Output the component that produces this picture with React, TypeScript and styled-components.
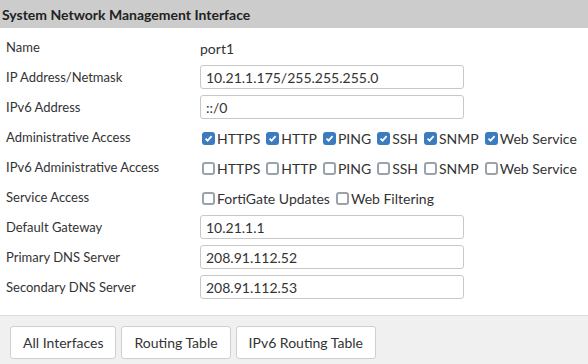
import styled, { createGlobalStyle } from 'styled-components';

const GlobalStyle = createGlobalStyle`
    html, body {
        margin: 0;
        padding: 0;
        background: #fff;
    }
    body {
        font-family: 'Lato', 'Liberation Sans', sans-serif;
        color: #333;
    }
`;

const Panel = styled.div`
    width: 588px;
    height: 364px;
    display: flex;
    flex-direction: column;
    overflow: hidden;
`;

const Header = styled.div`
    height: 28px;
    background: #cccccc;
    display: flex;
    align-items: center;
    padding-left: 2px;
    font-size: 14px;
    font-weight: 700;
    color: #222;
`;

const Form = styled.div`
    flex: 1;
    padding-top: 4px;
    display: flex;
    flex-direction: column;
`;

const Row = styled.div`
    height: 30px;
    display: grid;
    grid-template-columns: 200px 1fr;
    align-items: center;
`;

const Label = styled.div`
    padding-left: 6px;
    font-size: 13px;
    color: #333;
`;

const Value = styled.div`
    font-size: 14px;
    color: #333;
    padding-top: 2px;
`;

const TextInput = styled.input`
    box-sizing: border-box;
    width: 264px;
    height: 24px;
    border: 1px solid #c8c8c8;
    border-radius: 3px;
    padding: 0 5px;
    font-family: 'Lato', 'Liberation Sans', sans-serif;
    font-size: 14px;
    color: #333;
    outline: none;
    display: block;
`;

const CheckGroup = styled.div`
    display: flex;
    align-items: center;
    gap: 4px;
    padding-top: 3px;
`;

const CheckItem = styled.label`
    display: flex;
    align-items: center;
    gap: 2px;
    font-size: 14px;
    color: #333;
`;

const Box = styled.span<{ $checked: boolean }>`
    box-sizing: border-box;
    width: 13px;
    height: 13px;
    margin-left: 2px;
    border-radius: 3px;
    border: ${(p) => (p.$checked ? 'none' : '2px solid #9aa3ab')};
    background: ${(p) => (p.$checked ? '#3b7bbf' : '#fff')};
    display: flex;
    align-items: center;
    justify-content: center;
`;

const Footer = styled.div`
    height: 49px;
    border-top: 1px solid #dcdcdc;
    background: #f0f0f0;
    display: flex;
    align-items: center;
    gap: 5px;
    padding-left: 10px;
    padding-top: 4px;
    box-sizing: border-box;
`;

const FooterButton = styled.button`
    height: 33px;
    padding: 0 12px;
    background: #fff;
    border: 1px solid #cfcfcf;
    border-radius: 3px;
    font-family: 'Lato', 'Liberation Sans', sans-serif;
    font-size: 14px;
    color: #333;
`;

function Check({ label, checked }: { label: string; checked: boolean }) {
    return (
        <CheckItem>
            <Box $checked={checked}>
                {checked && (
                    <svg width="9" height="9" viewBox="0 0 9 9">
                        <path d="M1.5 4.6 L3.6 6.6 L7.6 2.2" fill="none" stroke="#fff" strokeWidth="1.8" />
                    </svg>
                )}
            </Box>
            {label}
        </CheckItem>
    );
}

const protocols = ['HTTPS', 'HTTP', 'PING', 'SSH', 'SNMP', 'Web Service'];

function App() {
    return (
        <Panel>
            <GlobalStyle />
            <Header>System Network Management Interface</Header>
            <Form>
                <Row>
                    <Label>Name</Label>
                    <Value>port1</Value>
                </Row>
                <Row>
                    <Label>IP Address/Netmask</Label>
                    <TextInput defaultValue="10.21.1.175/255.255.255.0" />
                </Row>
                <Row>
                    <Label>IPv6 Address</Label>
                    <TextInput defaultValue="::/0" />
                </Row>
                <Row>
                    <Label>Administrative Access</Label>
                    <CheckGroup>
                        {protocols.map((p) => (
                            <Check key={p} label={p} checked />
                        ))}
                    </CheckGroup>
                </Row>
                <Row>
                    <Label>IPv6 Administrative Access</Label>
                    <CheckGroup>
                        {protocols.map((p) => (
                            <Check key={p} label={p} checked={false} />
                        ))}
                    </CheckGroup>
                </Row>
                <Row>
                    <Label>Service Access</Label>
                    <CheckGroup>
                        <Check label="FortiGate Updates" checked={false} />
                        <Check label="Web Filtering" checked={false} />
                    </CheckGroup>
                </Row>
                <Row>
                    <Label>Default Gateway</Label>
                    <TextInput defaultValue="10.21.1.1" />
                </Row>
                <Row>
                    <Label>Primary DNS Server</Label>
                    <TextInput defaultValue="208.91.112.52" />
                </Row>
                <Row>
                    <Label>Secondary DNS Server</Label>
                    <TextInput defaultValue="208.91.112.53" />
                </Row>
            </Form>
            <Footer>
                <FooterButton>All Interfaces</FooterButton>
                <FooterButton>Routing Table</FooterButton>
                <FooterButton>IPv6 Routing Table</FooterButton>
            </Footer>
        </Panel>
    );
}

export default App;
